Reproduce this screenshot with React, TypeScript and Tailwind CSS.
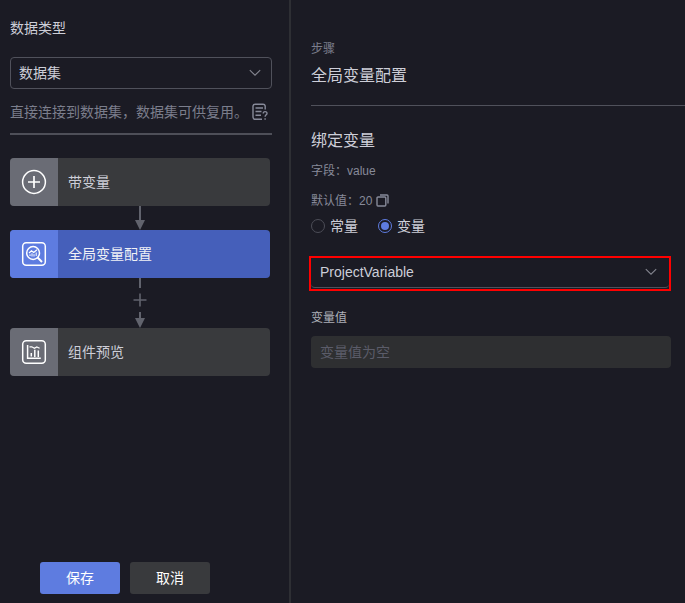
import type { ReactNode } from "react";

const ChevronDown = () => (
  <svg width="12" height="8" viewBox="0 0 12 8" fill="none" stroke="#84858f" strokeWidth="1.1">
    <path d="M0.8 1.2 L6 6.2 L11.2 1.2" />
  </svg>
);

const HelpDocIcon = () => (
  <svg width="16" height="18" viewBox="0 0 16 18" fill="none" stroke="#878a99" strokeWidth="1.4">
    <path d="M10 16.3H3.2A2.2 2.2 0 0 1 1 14.1V3A2.2 2.2 0 0 1 3.2 1.2H11A2.2 2.2 0 0 1 13.2 3V6.5" />
    <path d="M3.5 5H11M3.5 8.5H9.5M3.5 12.2H9" />
    <path d="M11.2 10.6C11.2 8 15 8 15 10.4C15 11.8 13.1 11.9 13.1 13.8M13.1 15.2V16.8" />
  </svg>
);

const CopyIcon = () => (
  <svg width="13" height="13" viewBox="0 0 13 13" fill="none" stroke="#878a99" strokeWidth="1.4">
    <rect x="1" y="3" width="8.8" height="9" rx="1" />
    <path d="M4 1H11A1 1 0 0 1 12 2V9.5" />
  </svg>
);

const PlusIcon = () => (
  <svg width="26" height="26" viewBox="0 0 26 26" fill="none" stroke="#fff" strokeWidth="1.5">
    <circle cx="13" cy="13" r="11.4" />
    <path d="M7 13H19M13 7V19" strokeWidth="1.7" />
  </svg>
);

const InspectIcon = () => (
  <svg width="26" height="26" viewBox="0 0 26 26" fill="none" stroke="#fff" strokeWidth="1.5">
    <rect x="1.7" y="1.7" width="22.6" height="22.6" rx="3.5" />
    <circle cx="12.1" cy="12" r="6.4" />
    <path d="M16.6 16.5L21 21" strokeWidth="1.9" />
    <path d="M8 12L10.5 9.7L12.7 11.4L16 8.7" strokeWidth="1.2" />
    <path d="M9 15V13.3M11 15.5V12.3M13 15.5V13.2M15.2 15V11.5" strokeWidth="1" />
  </svg>
);

const ChartIcon = () => (
  <svg width="26" height="26" viewBox="0 0 26 26" fill="none" stroke="#fff" strokeWidth="1.5">
    <rect x="1.7" y="1.7" width="22.6" height="22.6" rx="3.5" />
    <path d="M6.6 6V19.2H19.8" />
    <path d="M8.5 7.8H10.8L13.4 9.3L15.8 7.9L18.6 9.3" strokeWidth="1.2" />
    <path d="M10.3 17.5V14M13.8 18V10.8M17.3 18V11.6" strokeWidth="1.5" />
  </svg>
);

interface StepProps {
  icon: ReactNode;
  label: string;
  active?: boolean;
}

const Step = ({ icon, label, active }: StepProps) => (
  <div
    className={`flex h-12 w-[260px] overflow-hidden rounded ${
      active ? "bg-[#455fba] text-[#f0f1f6]" : "bg-[#393a3d] text-[#cdced8]"
    }`}
  >
    <div
      className={`flex w-12 items-center justify-center ${active ? "bg-[#5e7ce0]" : "bg-[#6a6c75]"}`}
    >
      {icon}
    </div>
    <span className="pl-2.5 text-sm leading-[48px]">{label}</span>
  </div>
);

const Radio = ({ label, checked }: { label: string; checked?: boolean }) => (
  <label className="flex items-center gap-[5px] text-sm leading-5">
    <span
      className={`flex h-3.5 w-3.5 items-center justify-center rounded-full border ${
        checked ? "border-[#5e7ce0]" : "border-[#4c4d57]"
      }`}
    >
      {checked && <span className="h-2 w-2 rounded-full bg-[#5e7ce0]" />}
    </span>
    {label}
  </label>
);

const App = () => {
  return (
    <div className="flex h-[603px] w-[685px] overflow-hidden bg-[#1b1b24] font-['Liberation_Sans','Noto_Sans_CJK_SC',sans-serif] text-[#cdced8]">
      {/* Left panel */}
      <div className="flex w-[291px] shrink-0 flex-col border-r-2 border-[#2e2f34] pl-2.5">
        <h2 className="mt-[18px] text-sm leading-5">数据类型</h2>

        <div className="mt-[19px] flex h-8 w-[262px] items-center justify-between rounded border border-[#50515b] pr-2.5 pl-2 text-sm">
          <span>数据集</span>
          <ChevronDown />
        </div>

        <div className="mt-[13px] flex h-5 w-[262px] items-center text-sm leading-5 whitespace-nowrap text-[#7b7e8c]">
          <span className="w-[242px]">直接连接到数据集，数据集可供复用。</span>
          <HelpDocIcon />
        </div>

        <div className="mt-[11px] h-0.5 w-[262px] bg-[#4e4f58]" />

        {/* Step flow */}
        <div className="mt-[23px] flex w-[260px] flex-col items-center">
          <Step icon={<PlusIcon />} label="带变量" />
          <svg width="12" height="24" viewBox="0 0 12 24" fill="#61636d">
            <path d="M5 0H7V14H11L6 24L1 14H5Z" />
          </svg>
          <Step icon={<InspectIcon />} label="全局变量配置" active />
          <svg width="14" height="50" viewBox="0 0 14 50" fill="#61636d">
            <path d="M6 0H8V10H6Z M6.2 15.5H7.8V21.2H13.5V22.8H7.8V28.5H6.2V22.8H0.5V21.2H6.2Z M6 34H8V40H12L7 50L2 40H6Z" />
          </svg>
          <Step icon={<ChartIcon />} label="组件预览" />
        </div>

        <div className="mt-auto mb-[9px] flex gap-2.5 pl-[30px] text-sm text-white">
          <button className="h-8 w-20 rounded-[3px] bg-[#5e7ce0]">保存</button>
          <button className="h-8 w-20 rounded-[3px] bg-[#393a3d]">取消</button>
        </div>
      </div>

      {/* Right panel */}
      <div className="flex flex-1 flex-col pl-5">
        <div className="mt-[41px] text-xs leading-4 text-[#7b7e8c]">步骤</div>
        <h1 className="mt-[7px] h-6 text-base leading-6">全局变量配置</h1>
        <div className="mt-[17px] h-px bg-[#50515b]" />

        <h2 className="mt-[23px] text-base leading-6">绑定变量</h2>
        <div className="mt-2.5 text-xs leading-4 text-[#878a99]">字段：value</div>
        <div className="mt-3.5 flex h-4 items-center gap-1 text-xs leading-4 text-[#878a99]">
          <span>默认值：20</span>
          <span className="pb-0.5">
            <CopyIcon />
          </span>
        </div>

        <div className="mt-[7px] flex gap-5">
          <Radio label="常量" />
          <Radio label="变量" checked />
        </div>

        <div className="mt-5 -ml-0.5 h-[35px] w-[362px] border-2 border-[#ff0000]">
          <div className="flex h-[30px] items-center justify-between rounded-b border-b border-[#50515b] pr-3 pb-0.5 pl-[9px] text-sm">
            <span>ProjectVariable</span>
            <ChevronDown />
          </div>
        </div>

        <div className="mt-[19px] text-xs leading-4 text-[#adb0b8]">变量值</div>
        <div className="mt-2.5 h-8 w-[360px] rounded bg-[#2e2f31] pl-[9px] text-sm leading-8 text-[#5b5c69]">
          变量值为空
        </div>
      </div>
    </div>
  );
};

export default App;
